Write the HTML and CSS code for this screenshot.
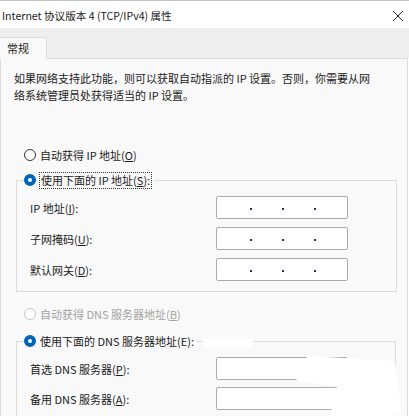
FILE: index.html
```html
<!DOCTYPE html>
<html lang="zh-CN">
<head>
  <meta charset="UTF-8">
  <title>Internet 协议版本 4 (TCP/IPv4) 属性</title>
  <link rel="stylesheet" href="styles.css">
</head>
<body>
  <div class="window">
    <div class="titlebar">
      <span class="title">Internet 协议版本 4 (TCP/IPv4) 属性</span>
      <svg class="close" width="12" height="12" viewBox="0 0 12 12">
        <path d="M1 1 L11 11 M11 1 L1 11" stroke="#222" stroke-width="1" fill="none"/>
      </svg>
    </div>

    <div class="tabs">
      <div class="tab">常规</div>
    </div>

    <div class="panel">
      <p class="desc">如果网络支持此功能，则可以获取自动指派的 IP 设置。否则，你需要从网络系统管理员处获得适当的 IP 设置。</p>

      <div class="radio-row first">
        <span class="radio"></span>
        <span>自动获得 IP 地址(<u>O</u>)</span>
      </div>

      <fieldset class="group">
        <legend class="radio-row">
          <span class="radio checked"></span>
          <span class="focus">使用下面的 IP 地址(<u>S</u>):</span>
        </legend>
        <div class="fields">
          <div class="field">
            <label>IP 地址(<u>I</u>):</label>
            <div class="input ip"><i></i><i></i><i></i></div>
          </div>
          <div class="field">
            <label>子网掩码(<u>U</u>):</label>
            <div class="input ip"><i></i><i></i><i></i></div>
          </div>
          <div class="field">
            <label>默认网关(<u>D</u>):</label>
            <div class="input ip"><i></i><i></i><i></i></div>
          </div>
        </div>
      </fieldset>

      <div class="radio-row dns-auto disabled">
        <span class="radio"></span>
        <span>自动获得 DNS 服务器地址(<u>B</u>)</span>
      </div>

      <fieldset class="group dns">
        <legend class="radio-row">
          <span class="radio checked"></span>
          <span>使用下面的 DNS 服务器地址(E):</span>
        </legend>
        <div class="fields">
          <div class="field">
            <label>首选 DNS 服务器(<u>P</u>):</label>
            <div class="input"></div>
          </div>
          <div class="field">
            <label>备用 DNS 服务器(<u>A</u>):</label>
            <div class="input"></div>
          </div>
        </div>
      </fieldset>
    </div>

    <!-- white brush marks over the lower right of the dialog -->
    <div class="smear smear-top"></div>
    <div class="smear smear-right"></div>
  </div>
</body>
</html>
```

FILE: styles.css
```css
body {
  margin: 0;
  background: #fff;
  font-family: "Noto Sans CJK SC", "Noto Sans", sans-serif;
  font-size: 11px;
  color: #1a1a1a;
  overflow: hidden;
}
.window {
  width: 409px;
  height: 416px;
  position: relative;
  overflow: hidden;
}
.titlebar {
  height: 28px;
  box-sizing: border-box;
  border-top: 1px solid #c4c4c4;
  display: flex;
  align-items: center;
  justify-content: space-between;
  padding: 2px 5px 0 2px;
}
.title {
  font-size: 10.6px;
}
.close {
  display: block;
}
.tabs {
  height: 30px;
  background: #efefef;
  display: flex;
  align-items: flex-end;
}
.tab {
  width: 47px;
  height: 22px;
  box-sizing: border-box;
  background: #f9f9f9;
  border: 1px solid #dcdcdc;
  border-left: none;
  border-bottom: none;
  padding-left: 7px;
  line-height: 21px;
  margin-bottom: -1px;
  position: relative;
  z-index: 1;
}
.panel {
  width: 408px;
  height: 358px;
  box-sizing: border-box;
  background: #f9f9f9;
  border: 1px solid #dcdcdc;
  border-bottom: none;
}
.desc {
  margin: 0;
  padding: 11px 0 0 13px;
  width: 360px;
  line-height: 17px;
}
.radio-row {
  display: flex;
  align-items: center;
  height: 20px;
  gap: 4px;
}
.radio-row.first {
  margin: 41px 0 0 23px;
}
.radio {
  width: 12px;
  height: 12px;
  box-sizing: border-box;
  border: 1px solid #333;
  border-radius: 50%;
  background: #fff;
  flex: none;
}
.radio.checked {
  border: 4px solid #0063b8;
  background: #fff;
}
.disabled {
  color: #a2a2a2;
}
.disabled .radio {
  border-color: #c8c8c8;
}
.focus {
  border: 1px dotted #333;
  padding: 0 1px;
  line-height: 15px;
  margin-left: -1px;
}
.group {
  margin: 5px 0 0 15px;
  width: 381px;
  box-sizing: border-box;
  padding: 0;
  border: 1px solid #dcdcdc;
  min-width: 0;
}
.group legend {
  padding: 0 2px 0 0;
  margin-left: 7px;
}
.fields {
  padding: 6px 0 10px 13px;
  display: flex;
  flex-direction: column;
  gap: 8px;
}
.field {
  display: flex;
  align-items: center;
}
.field label {
  width: 186px;
}
.input {
  width: 132px;
  height: 23px;
  box-sizing: border-box;
  background: #fff;
  border: 1px solid #ababab;
  border-radius: 2px;
}
.ip {
  display: flex;
  align-items: center;
  padding-left: 33px;
  gap: 30px;
}
.ip i {
  width: 2px;
  height: 2px;
  background: #1f2a66;
  margin-top: 3px;
}
.dns-auto {
  margin: 12px 0 0 23px;
}
.group.dns {
  margin-top: 7px;
  width: 380px;
}
.dns .fields {
  gap: 7px;
}
.smear {
  position: absolute;
  background: #fff;
  filter: blur(1.5px);
}
.smear-top {
  left: 203px;
  top: 337px;
  width: 50px;
  height: 10px;
}
.smear-right {
  left: 290px;
  top: 350px;
  width: 114px;
  height: 66px;
  clip-path: polygon(18px 6px, 105px 11px, 112px 66px, 40px 66px, 47px 36px, 10px 32px, 0 25px);
}
```
